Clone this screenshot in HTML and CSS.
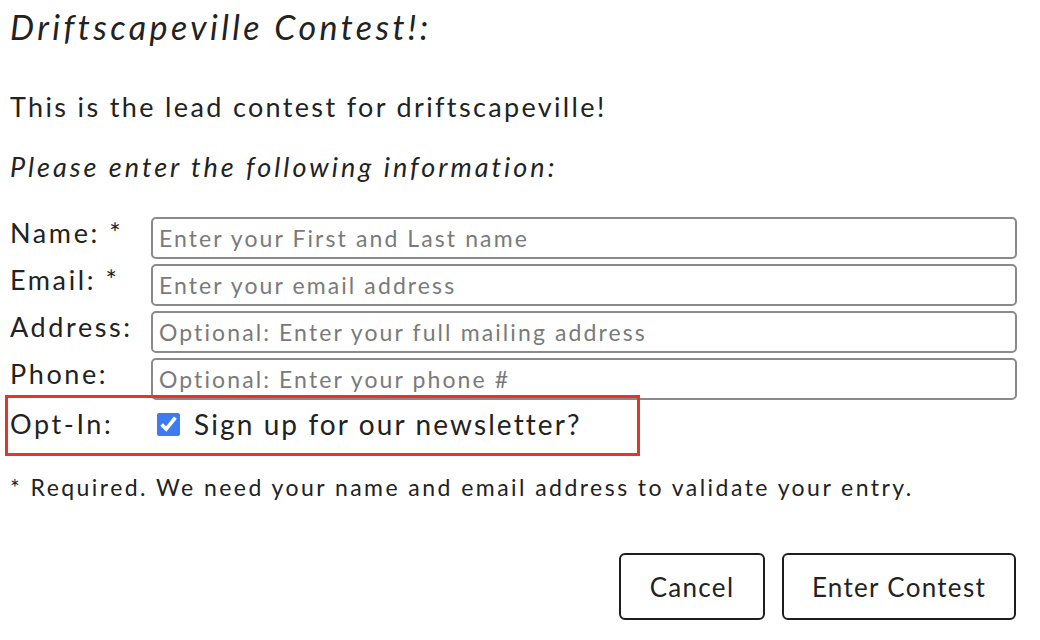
FILE: index.html
```html
<!DOCTYPE html>
<html lang="en">
<head>
<meta charset="utf-8">
<title>Driftscapeville Contest</title>
<link rel="stylesheet" href="styles.css">
</head>
<body>
<main class="page">
  <h1 class="title">Driftscapeville Contest!:</h1>
  <p class="lead">This is the lead contest for driftscapeville!</p>
  <p class="prompt">Please enter the following information:</p>
  <form class="form">
    <div class="fields">
      <label class="label" for="name">Name: *</label>
      <input class="field" id="name" type="text" placeholder="Enter your First and Last name">
      <label class="label" for="email">Email: *</label>
      <input class="field" id="email" type="email" placeholder="Enter your email address">
      <label class="label" for="address">Address:</label>
      <input class="field" id="address" type="text" placeholder="Optional: Enter your full mailing address">
      <label class="label" for="phone">Phone:</label>
      <input class="field" id="phone" type="tel" placeholder="Optional: Enter your phone #">
    </div>
    <div class="optin">
      <span class="label">Opt-In:</span>
      <label class="check">
        <input class="checkbox" type="checkbox" checked>
        <span class="check-text">Sign up for our newsletter?</span>
      </label>
    </div>
    <p class="note">* Required. We need your name and email address to validate your entry.</p>
    <div class="actions">
      <button class="btn btn-cancel" type="button">Cancel</button>
      <button class="btn btn-enter" type="submit">Enter Contest</button>
    </div>
  </form>
</main>
</body>
</html>
```

FILE: styles.css
```css
* { box-sizing: border-box; }

html, body {
  margin: 0;
  padding: 0;
  background: #ffffff;
}

body {
  font-family: Lato, "Noto Sans", sans-serif;
  color: #222222;
}

.page {
  padding: 0 23px 0 10px;
}

.title {
  margin: 7px 0 0;
  font-size: 34px;
  line-height: 40px;
  font-style: italic;
  font-weight: 400;
  letter-spacing: 3.4px;
}

.lead,
.prompt {
  margin: 0;
  font-size: 27px;
  line-height: 32px;
  letter-spacing: 2.35px;
}

.lead { margin-top: 44px; }
.prompt { margin-top: 28px; font-style: italic; letter-spacing: 3px; }

.form { margin-top: 34px; }

.fields {
  display: grid;
  grid-template-columns: 141px 1fr;
  row-gap: 5px;
}

.label {
  font-size: 27px;
  line-height: 32px;
  letter-spacing: 2.6px;
  color: #222222;
}

.field {
  height: 42px;
  margin: 0;
  padding: 0 6px;
  border: 2px solid #8a8a8a;
  border-radius: 5px;
  font-family: Lato, "Noto Sans", sans-serif;
  font-size: 23px;
  letter-spacing: 2.1px;
  color: #222222;
  background: #ffffff;
}

.field::placeholder {
  color: #7a7a7a;
  opacity: 1;
}

.optin {
  position: relative;
  display: grid;
  grid-template-columns: 148px 1fr;
  align-items: center;
  margin-top: 2px;
  height: 44px;
}

.optin::after {
  content: "";
  position: absolute;
  left: -5px;
  top: -7px;
  width: 629px;
  bottom: -10px;
  border: 3px solid #e3352b;
  pointer-events: none;
}

.check {
  display: flex;
  align-items: center;
  gap: 14px;
}

.checkbox {
  width: 23px;
  height: 23px;
  margin: 0 0 0 -1px;
  accent-color: #3e7bf2;
}

.check-text {
  font-size: 28px;
  line-height: 36px;
  letter-spacing: 2.1px;
}

.note {
  margin: 27px 0 0;
  font-size: 23px;
  line-height: 28px;
  letter-spacing: 2.45px;
}

.actions {
  display: flex;
  justify-content: flex-end;
  gap: 17px;
  margin-top: 52px;
  padding-right: 1px;
}

.btn {
  height: 67px;
  padding: 0;
  border: 2px solid #1e1e1e;
  border-radius: 6px;
  background: #ffffff;
  font-family: Lato, "Noto Sans", sans-serif;
  font-size: 26px;
  letter-spacing: 1.3px;
  color: #222222;
  cursor: pointer;
}

.btn-cancel { width: 146px; }
.btn-enter { width: 234px; }
```
